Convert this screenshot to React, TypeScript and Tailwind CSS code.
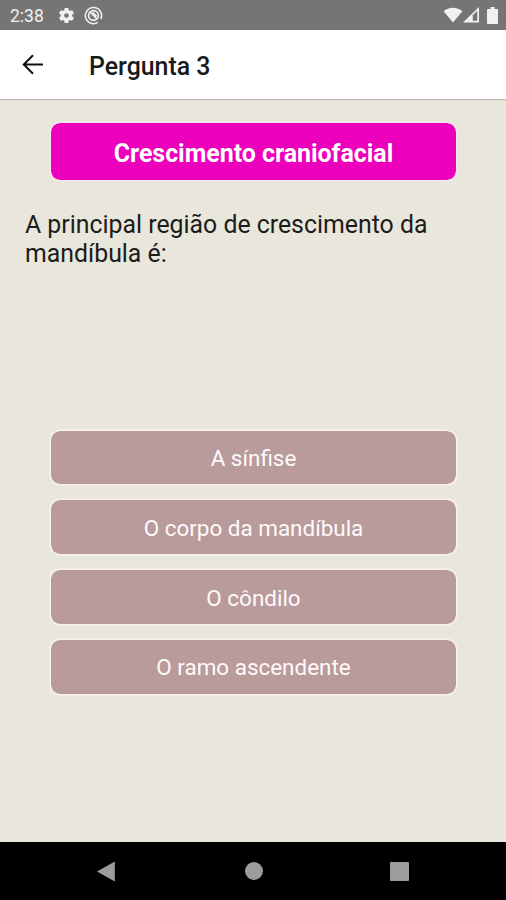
import React from 'react';

const options = ['A sínfise', 'O corpo da mandíbula', 'O côndilo', 'O ramo ascendente'];

function StatusBar() {
  return (
    <div className="flex h-[30px] shrink-0 items-center bg-[#757575] pl-[10px] pr-[8px] text-[#f1f1f1]">
      <span className="w-[47px] pt-[3px] text-[17.5px] leading-none">2:38</span>
      <svg className="h-[19px] w-[19px]" viewBox="0 0 24 24" fill="currentColor">
        <path d="M19.14 12.94c.04-.3.06-.61.06-.94 0-.32-.02-.64-.07-.94l2.03-1.58c.18-.14.23-.41.12-.61l-1.92-3.32c-.12-.22-.37-.29-.59-.22l-2.39.96c-.5-.38-1.03-.7-1.62-.94l-.36-2.54c-.04-.24-.24-.41-.48-.41h-3.84c-.24 0-.43.17-.47.41l-.36 2.54c-.59.24-1.13.57-1.62.94l-2.39-.96c-.22-.08-.47 0-.59.22L2.74 8.87c-.12.21-.08.47.12.61l2.03 1.58c-.05.3-.09.63-.09.94s.02.64.07.94l-2.03 1.58c-.18.14-.23.41-.12.61l1.92 3.32c.12.22.37.29.59.22l2.39-.96c.5.38 1.03.7 1.62.94l.36 2.54c.05.24.24.41.48.41h3.84c.24 0 .44-.17.47-.41l.36-2.54c.59-.24 1.13-.56 1.62-.94l2.39.96c.22.08.47 0 .59-.22l1.92-3.32c.12-.22.07-.47-.12-.61l-2.01-1.58zM12 15a3 3 0 1 1 0-6 3 3 0 0 1 0 6z" />
      </svg>
      <svg className="ml-[8px] h-[19px] w-[19px]" viewBox="0 0 19 19" fill="none" stroke="currentColor">
        <path d="M13.8 16.4A8.1 8.1 0 1 1 16.8 13" strokeWidth="1.6" />
        <circle cx="9.5" cy="9.5" r="4.9" strokeWidth="1.6" />
        <path d="M6 6l7 7M8.6 6.4l4 4" strokeWidth="1.5" />
      </svg>
      <div className="ml-auto flex items-center">
        <svg className="h-[16px] w-[20px]" viewBox="0 0 20 16" fill="currentColor">
          <path d="M10 15.5L.6 4.2C3.2 2 6.4.8 10 .8s6.8 1.2 9.4 3.4z" />
        </svg>
        <svg className="h-[16px] w-[17px]" viewBox="0 0 17 16">
          <path d="M0 15.5L16 0v15.5z" fill="currentColor" />
          <path d="M9.8 8.2L14.3 3.8v9.9H9.8z" fill="#757575" />
        </svg>
        <svg className="ml-[7px] h-[17px] w-[11px]" viewBox="0 0 11 17" fill="currentColor">
          <path d="M3.5 0h4v2H10a1 1 0 0 1 1 1v13a1 1 0 0 1-1 1H1a1 1 0 0 1-1-1V3a1 1 0 0 1 1-1h2.5z" />
        </svg>
      </div>
    </div>
  );
}

function Header() {
  return (
    <header className="flex h-[69px] shrink-0 items-center bg-white pl-[22px] shadow-[0_1px_1px_rgba(0,0,0,0.2)]">
      <svg className="h-[22px] w-[22px]" viewBox="0 0 22 22" fill="none" stroke="#111" strokeWidth="2">
        <path d="M21 10.5H2M11 1.3L1.8 10.5l9.2 9.2" />
      </svg>
      <h1 className="ml-[45px] pt-[5px] text-[24.9px] font-medium leading-none text-[#1a1a1a]">Pergunta 3</h1>
    </header>
  );
}

function NavBar() {
  return (
    <nav className="flex h-[58px] shrink-0 items-center justify-between bg-black px-[97px]">
      <svg className="h-[21px] w-[18px]" viewBox="0 0 18 21" fill="#9c9c9c">
        <path d="M17.8.5v20L0 10.5z" />
      </svg>
      <div className="ml-[2px] h-[18px] w-[18px] rounded-full bg-[#9c9c9c]" />
      <div className="h-[19px] w-[19px] rounded-[1px] bg-[#9c9c9c]" />
    </nav>
  );
}

export default function App() {
  return (
    <div className="flex h-[900px] w-[506px] flex-col overflow-hidden bg-[#e9e7dc] font-[Roboto,sans-serif]">
      <StatusBar />
      <Header />

      <main className="flex flex-1 flex-col pl-[50px] pr-[49px] pt-[23px]">
        <div className="flex h-[59px] items-center justify-center rounded-[10px] border border-[#fbe6f3] bg-[#ec00bc] bg-clip-padding pt-[4px] text-[24.9px] font-bold text-white">
          Crescimento craniofacial
        </div>
        <p className="-mx-[25px] mt-[29px] h-[219px] text-[24.85px] leading-[29px] text-[#1c1c1a]">
          A principal região de crescimento da mandíbula é:
        </p>

        <div className="flex flex-col gap-[14px] pt-[0.5px]">
          {options.map((option) => (
            <button
              key={option}
              className="h-[55.8px] rounded-[10px] border border-[#f7f2ea] bg-[#b89b9a] bg-clip-padding pt-[3px] text-[22.45px] text-[#fffafa] shadow-[0_0_0_0.5px_#f7f2ea]"
            >
              {option}
            </button>
          ))}
        </div>
      </main>

      <NavBar />
    </div>
  );
}
